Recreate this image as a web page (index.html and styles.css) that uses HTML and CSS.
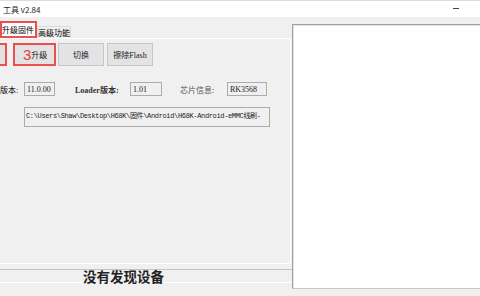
FILE: index.html
```html
<!DOCTYPE html>
<html lang="zh-CN">
<head>
  <meta charset="UTF-8">
  <title>升级工具 v2.84</title>
  <link rel="stylesheet" href="styles.css">
</head>
<body>
  <div class="titlebar">
    <span class="title">工具 v2.84</span>
    <span class="min"></span>
  </div>
  <div class="main">
    <div class="left">
      <div class="tabs">
        <div class="tab active">升级固件</div>
        <div class="tab">高级功能</div>
      </div>
      <div class="page">
        <div class="btn-row">
          <button class="btn marked cut"></button>
          <button class="btn marked step"><span class="num">3</span>升级</button>
          <button class="btn">切换</button>
          <button class="btn">擦除Flash</button>
        </div>
        <div class="info-row">
          <span class="lbl lbl-fw">版本:</span>
          <span class="box box-fw">11.0.00</span>
          <span class="lbl lbl-loader">Loader版本:</span>
          <span class="box box-loader">1.01</span>
          <span class="lbl lbl-chip">芯片信息:</span>
          <span class="box box-chip">RK3568</span>
        </div>
        <div class="path">C:\Users\Shaw\Desktop\H68K\固件\Android\H68K-Android-eMMC线刷-</div>
      </div>
      <div class="status">没有发现设备</div>
    </div>
    <div class="log"></div>
  </div>
</body>
</html>
```

FILE: styles.css
```css
body {
  margin: 0;
  width: 480px;
  height: 296px;
  overflow: hidden;
  background-color: #f0f0f0;
  font-family: "Noto Sans CJK SC", sans-serif;
  color: #000000;
}

.titlebar {
  height: 17px;
  box-sizing: border-box;
  background-color: #ffffff;
  border-top: 1px solid #dcdcdc;
  display: flex;
  align-items: center;
  justify-content: space-between;
  overflow: hidden;
}
.title {
  font-size: 8px;
  margin-left: 3px;
  color: #1a1a1a;
  white-space: nowrap;
}
.min {
  width: 6px;
  height: 1px;
  background-color: #444444;
  margin-right: 21px;
  margin-top: -1px;
}

.main {
  display: flex;
  height: 279px;
}
.left {
  width: 292px;
  display: flex;
  flex-direction: column;
}

/* tabs */
.tabs {
  margin-top: 4px;
  height: 17px;
  display: flex;
  align-items: flex-end;
}
.tab {
  font-size: 8px;
  display: flex;
  align-items: center;
  justify-content: center;
  box-sizing: border-box;
}
.tab.active {
  width: 37px;
  height: 17px;
  background-color: #ffffff;
  border: 2px solid #ea5050;
  justify-content: flex-start;
}
.tab:not(.active) {
  width: 34px;
  height: 12px;
  border: 1px solid #d9d9d9;
  border-bottom: none;
}

.page {
  width: 291px;
  height: 226px;
  box-sizing: border-box;
  border-top: 1px solid #ffffff;
  border-right: 1px solid #ffffff;
  border-bottom: 1px solid #ffffff;
  padding-top: 4px;
}

/* buttons */
.btn-row {
  display: flex;
  gap: 2px;
}
.btn {
  height: 23px;
  width: 46px;
  box-sizing: border-box;
  background-color: #e3e3e3;
  border: 1px solid #c6c6c6;
  font-family: "Noto Sans CJK SC", sans-serif;
  font-size: 8px;
  color: #222222;
  padding: 0;
  display: flex;
  align-items: center;
  justify-content: center;
}
.btn.marked {
  border: 2px solid #ea5050;
}
.btn.cut {
  width: 47px;
  margin-left: -40px;
  margin-right: 4px;
}
.btn.step {
  width: 43px;
  justify-content: flex-start;
  padding-left: 8px;
}
.btn:last-child {
  margin-left: 1px;
  font-family: "Liberation Serif", "Noto Sans CJK SC", serif;
}
.num {
  color: #e83a3a;
  font-family: "Liberation Sans", sans-serif;
  font-size: 15px;
  line-height: 15px;
}

/* version info */
.info-row {
  display: flex;
  align-items: center;
  margin-top: 16px;
  height: 14px;
  font-family: "Liberation Serif", "Noto Sans CJK SC", serif;
  font-size: 8px;
}
.lbl {
  white-space: nowrap;
}
.lbl-fw {
  width: 24px;
}
.lbl-loader {
  margin-left: 20px;
  width: 55px;
  font-weight: bold;
  color: #333333;
}
.lbl-chip {
  margin-left: 18px;
  width: 47px;
  font-family: "Noto Sans CJK SC", sans-serif;
  color: #555555;
}
.box {
  height: 14px;
  box-sizing: border-box;
  border: 1px solid #acacac;
  padding-left: 2px;
  display: flex;
  align-items: center;
  color: #222222;
}
.box-fw {
  width: 31px;
}
.box-loader {
  width: 32px;
}
.box-chip {
  width: 40px;
}

.path {
  margin: 11px 0 0 24px;
  width: 246px;
  height: 20px;
  box-sizing: border-box;
  border: 1px solid #acacac;
  padding: 2px 0 0 1px;
  font-family: "Liberation Mono", "Noto Sans CJK SC", monospace;
  font-size: 7px;
  letter-spacing: -0.35px;
  white-space: nowrap;
  overflow: hidden;
  color: #222222;
}

/* status bar */
.status {
  margin-top: 5px;
  height: 14px;
  box-sizing: border-box;
  border-top: 1px solid #c4c4c4;
  border-bottom: 1px solid #ffffff;
  padding-left: 83px;
  font-size: 13.5px;
  font-weight: bold;
  line-height: 12px;
  color: #222222;
}

/* log panel */
.log {
  flex: 1;
  margin-top: 7px;
  height: 265px;
  box-sizing: border-box;
  background-color: #ffffff;
  border-left: 1px solid #a0a0a0;
  border-top: 1px solid #a0a0a0;
  border-bottom: 1px solid #c8c8c8;
  box-shadow: inset 1px 1px 0 #e3e3e3;
}
```
